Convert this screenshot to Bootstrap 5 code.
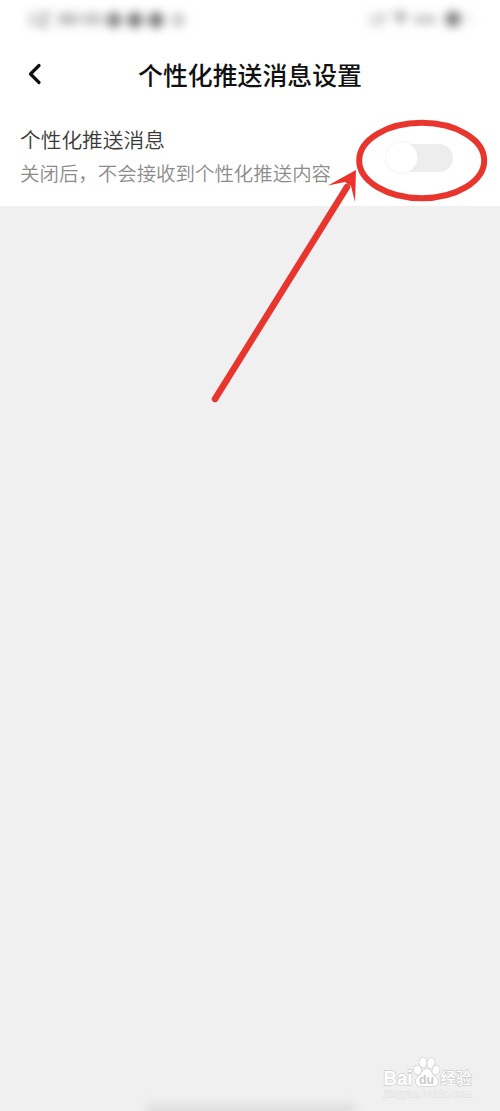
<!DOCTYPE html>
<html lang="zh-CN">
<head>
<meta charset="utf-8">
<meta name="viewport" content="width=device-width, initial-scale=1">
<title>个性化推送消息设置</title>
<link href="https://cdn.jsdelivr.net/npm/bootstrap@5.3.0/dist/css/bootstrap.min.css" rel="stylesheet">
<style>
  body { font-family: "Noto Sans CJK SC", sans-serif; background: #f0f0f0; height: 1111px; overflow: hidden; }
  .status-bar { height: 40px; }
  .title-bar { height: 68px; padding: 0 27px; }
  .page-title { font-size: 24.9px; font-weight: 500; color: #111; line-height: 36px; margin-top: -1px; }
  .side-slot { width: 20px; }
  .setting-row { height: 98px; padding: 0 47px 0 20px; }
  .setting-text { padding-top: 14px; }
  .setting-name { font-size: 20.7px; line-height: 34px; color: #3a3a3a; font-weight: 350; }
  .setting-hint { font-size: 19.45px; line-height: 34px; color: #8c8c8c; font-weight: 350; }
  .toggle-track { width: 67px; height: 28px; background: #ededed; border-radius: 14px; margin-top: 1px; }
  .toggle-knob { width: 33px; height: 33px; background: #fff; border: 1px solid #f7f7f7; margin-left: -1px; box-shadow: 0 0 2px rgba(0,0,0,.03); }
  .home-bar { width: 208px; height: 12px; background: #dedede; filter: blur(4px); margin-bottom: -5px; }
</style>
</head>
<body class="d-flex flex-column position-relative m-0">
  <header class="bg-white">
    <div class="status-bar">
      <svg class="d-block" width="500" height="40">
        <defs><filter id="soft" x="-20%" y="-120%" width="140%" height="340%" color-interpolation-filters="sRGB"><feGaussianBlur stdDeviation="4.800"/></filter></defs>
        <g filter="url(#soft)" fill="#777">
          <rect x="30" y="12" width="4" height="14" opacity=".5"/>
          <path d="M38 12h12v4l-9 8h10v3H37v-4l9-8h-8z" opacity=".6"/>
          <rect x="58" y="13" width="20" height="12" opacity=".45"/>
          <rect x="82" y="13" width="20" height="12" opacity=".4"/>
          <circle cx="114" cy="20" r="8" opacity=".85"/>
          <circle cx="135" cy="20" r="8" opacity=".95"/>
          <circle cx="156" cy="20" r="8" opacity=".95"/>
          <circle cx="178" cy="20" r="7" opacity=".4"/>
          <rect x="369" y="14" width="8" height="12" opacity=".25"/>
          <path d="M378 13h10l-5 13h-4z" opacity=".35"/>
          <path d="M392 12h16l-7 14z" opacity=".6"/>
          <rect x="414" y="15" width="22" height="9" opacity=".4"/>
          <circle cx="453" cy="19" r="8" opacity=".9"/>
          <rect x="467" y="14" width="4" height="10" opacity=".2"/>
        </g>
      </svg>
    </div>
    <nav class="title-bar d-flex align-items-center justify-content-between">
      <a href="#" class="side-slot d-flex" aria-label="返回">
        <svg width="16" height="24" viewBox="0 0 16 24" fill="none" stroke="#111" stroke-width="3.200" stroke-linecap="round" stroke-linejoin="round"><path d="M12 3.500 3.500 12l8.500 8.500"/></svg>
      </a>
      <h1 class="page-title mb-0 text-nowrap">个性化推送消息设置</h1>
      <span class="side-slot"></span>
    </nav>
  </header>
  <main class="flex-grow-1">
    <section class="setting-row bg-white d-flex justify-content-between">
      <div class="setting-text text-nowrap">
        <div class="setting-name">个性化推送消息</div>
        <div class="setting-hint">关闭后，不会接收到个性化推送内容</div>
      </div>
      <div class="align-self-center toggle-track d-flex align-items-center" role="switch" aria-checked="false">
        <div class="toggle-knob rounded-circle"></div>
      </div>
    </section>
  </main>
  <footer class="d-flex justify-content-center"><div class="home-bar"></div></footer>

  <svg class="position-absolute top-0 start-0 pe-none" width="500" height="1111" viewBox="0 0 500 1111">
    <ellipse cx="421.700" cy="160.500" rx="62.500" ry="37.700" fill="none" stroke="#e8362f" stroke-width="6"/>
    <path d="M215 399 347 187" stroke="#e8362f" stroke-width="6.500" stroke-linecap="round"/>
    <path d="M356 170 328 185.500 345 182 351 186 355 202z" fill="#ee322b"/>
    <g fill="#fff" stroke="#cfcfcf" stroke-width="1.400" paint-order="stroke">
      <text x="383.500" y="1085" font-size="20" font-weight="700" font-family="Liberation Sans, sans-serif" textLength="29" lengthAdjust="spacingAndGlyphs">Bai</text>
      <ellipse cx="417.500" cy="1070" rx="3.600" ry="4.700" transform="rotate(-15 417.500 1070)"/>
      <ellipse cx="423" cy="1062.500" rx="3.600" ry="5"/>
      <ellipse cx="431" cy="1063" rx="3.600" ry="5" transform="rotate(12 431 1063)"/>
      <ellipse cx="436" cy="1070" rx="3.400" ry="4.600" transform="rotate(18 436 1070)"/>
      <path d="M427 1069c-4 0-5 4-8 7-3 2-4 4-3 7 1 4 5 3 11 3s10 1 11-3c1-3-1-5-4-7-3-3-3-7-7-7z"/>
      <text x="419" y="1084" font-size="13" font-weight="700" font-family="Liberation Sans, sans-serif" fill="#cacaca" stroke="none" textLength="15" lengthAdjust="spacingAndGlyphs">du</text>
      <text x="440.500" y="1084" font-size="15.500" font-weight="500" font-family="Noto Sans CJK SC, sans-serif">经验</text>
      <text x="384" y="1097" font-size="11" font-family="Liberation Serif, serif" fill="#f6f6f6" stroke="#dcdcdc" stroke-width=".8" textLength="88" lengthAdjust="spacingAndGlyphs">jingyan.baidu.com</text>
    </g>
  </svg>
  <script src="https://cdn.jsdelivr.net/npm/bootstrap@5.3.0/dist/js/bootstrap.bundle.min.js"></script>
</body>
</html>
